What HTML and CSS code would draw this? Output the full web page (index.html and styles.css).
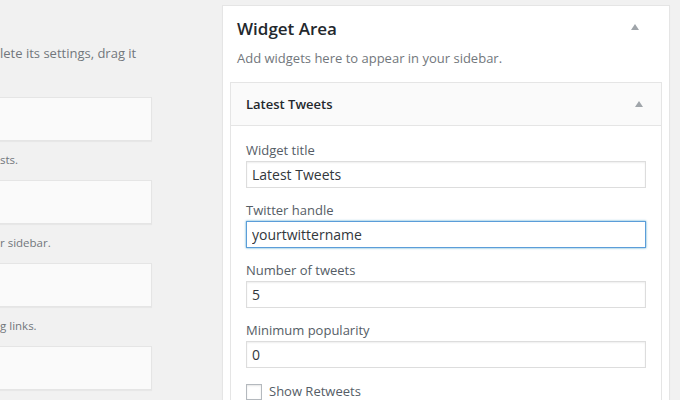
FILE: index.html
```html
<!DOCTYPE html>
<html>
<head>
<meta charset="utf-8">
<link rel="stylesheet" href="styles.css">
</head>
<body>
<div class="page">
  <div class="available">
    <p class="intro">lete its settings, drag it</p>
    <div class="wbox"></div>
    <p class="wdesc">sts.</p>
    <div class="wbox"></div>
    <p class="wdesc">r sidebar.</p>
    <div class="wbox"></div>
    <p class="wdesc">g links.</p>
    <div class="wbox"></div>
  </div>
  <div class="sidebar">
    <div class="sidebar-head">
      <h2 class="sidebar-title">Widget Area</h2>
      <span class="arrow arrow-big"></span>
    </div>
    <p class="sidebar-desc">Add widgets here to appear in your sidebar.</p>
    <div class="widget">
      <div class="widget-top">
        <h3 class="widget-title">Latest Tweets</h3>
        <span class="arrow"></span>
      </div>
      <div class="widget-inside">
        <div class="field">
          <label class="field-label">Widget title</label>
          <input class="text-input" type="text" value="Latest Tweets">
        </div>
        <div class="field">
          <label class="field-label">Twitter handle</label>
          <input class="text-input is-focused" type="text" value="yourtwittername">
        </div>
        <div class="field">
          <label class="field-label">Number of tweets</label>
          <input class="text-input" type="text" value="5">
        </div>
        <div class="field">
          <label class="field-label">Minimum popularity</label>
          <input class="text-input" type="text" value="0">
        </div>
        <div class="check-row">
          <input class="checkbox" type="checkbox">
          <label class="check-label">Show Retweets</label>
        </div>
      </div>
    </div>
  </div>
</div>
</body>
</html>
```

FILE: styles.css
```css
* { box-sizing: border-box; }
html, body {
  margin: 0;
  padding: 0;
  background: #f1f1f1;
  font-family: "Open Sans", "Liberation Sans", sans-serif;
  color: #444;
  overflow: hidden;
}
.page {
  display: flex;
  align-items: flex-start;
  width: 680px;
  height: 400px;
  overflow: hidden;
}
.available {
  width: 162px;
  margin-left: -10px;
  flex: none;
}
.intro {
  margin: 44px 0 34px;
  padding-left: 10px;
  font-size: 13px;
  line-height: 19px;
  color: #72777c;
  white-space: nowrap;
}
.wbox {
  height: 44px;
  background: #fafafa;
  border: 1px solid #e5e5e5;
  box-shadow: 0 1px 1px rgba(0,0,0,.04);
}
.wdesc {
  margin: 9px 0 10px;
  padding-left: 10px;
  font-size: 11.5px;
  line-height: 20px;
  color: #72777c;
  white-space: nowrap;
}
.sidebar {
  margin-left: 70px;
  margin-top: 5px;
  width: 448px;
  height: 400px;
  background: #fff;
  border: 1px solid #e5e5e5;
  box-shadow: 0 1px 1px rgba(0,0,0,.04);
  padding: 11px 7px 0;
  flex: none;
}
.sidebar-head {
  display: flex;
  align-items: center;
  justify-content: space-between;
  padding: 0 23px 0 7px;
}
.sidebar-title {
  margin: 0;
  font-size: 17px;
  line-height: 24px;
  font-weight: 600;
  color: #23282d;
}
.arrow {
  width: 0;
  height: 0;
  border-left: 4.5px solid transparent;
  border-right: 4.5px solid transparent;
  border-bottom: 6px solid #a0a5aa;
}
.arrow-big { margin-top: -4px; }
.sidebar-desc {
  margin: 7px 0 14px;
  padding-left: 7px;
  font-size: 13px;
  line-height: 20px;
  color: #72777c;
}
.widget {
  border: 1px solid #e5e5e5;
  background: #fff;
}
.widget-top {
  display: flex;
  align-items: center;
  justify-content: space-between;
  height: 43px;
  background: #fafafa;
  border-bottom: 1px solid #e5e5e5;
  padding: 0 18px 0 15px;
}
.widget-title {
  margin: 0;
  font-size: 13px;
  font-weight: 600;
  color: #23282d;
}
.widget-inside {
  padding: 14px 15px 0;
}
.field {
  display: flex;
  flex-direction: column;
  gap: 1px;
  margin-bottom: 12px;
}
.field-label {
  font-size: 13px;
  line-height: 20px;
  color: #555d66;
}
.text-input {
  width: 400px;
  height: 27px;
  margin: 0;
  padding: 0 5px;
  border: 1px solid #ddd;
  border-radius: 0;
  box-shadow: inset 0 1px 2px rgba(0,0,0,.07);
  background: #fff;
  font-family: "Open Sans", "Liberation Sans", sans-serif;
  font-size: 14px;
  color: #32373c;
  outline: none;
}
.text-input.is-focused {
  border-color: #5b9dd9;
  box-shadow: 0 0 2px rgba(30,140,190,.8);
}
.check-row {
  display: flex;
  align-items: flex-start;
  gap: 7px;
  margin-top: 16px;
}
.checkbox {
  appearance: none;
  -webkit-appearance: none;
  flex: none;
  width: 16px;
  height: 16px;
  margin: 0;
  border: 1px solid #b4b9be;
  background: #fff;
  box-shadow: inset 0 1px 2px rgba(0,0,0,.1);
}
.check-label {
  font-size: 13px;
  line-height: 14px;
  color: #555d66;
}
```
